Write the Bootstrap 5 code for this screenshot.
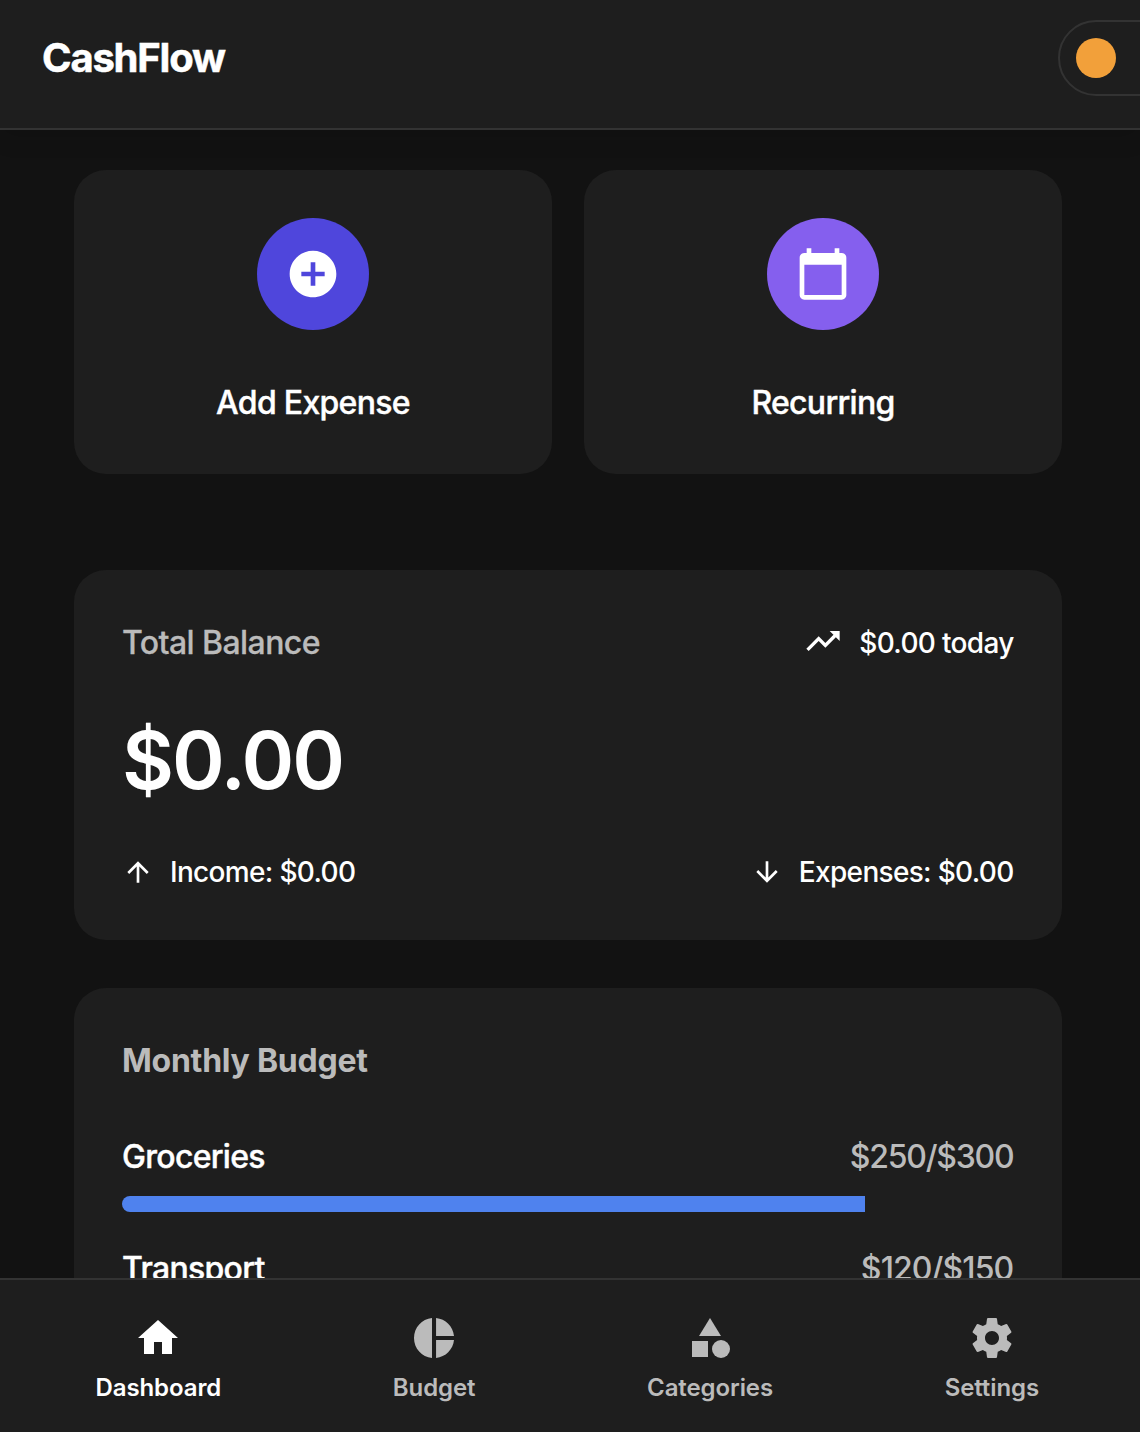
<!DOCTYPE html>
<html lang="en">
<head>
<meta charset="utf-8">
<meta name="viewport" content="width=device-width, initial-scale=1">
<title>CashFlow</title>
<link rel="stylesheet" href="https://cdn.jsdelivr.net/npm/bootstrap@5.3.0/dist/css/bootstrap.min.css">
<style>
body{background:#121212;color:#fff;font-family:Inter,"Liberation Sans",sans-serif;font-size:32px;line-height:40px}
svg{fill:currentColor;display:block;flex:none}
.topbar{height:130px;background:#1e1e1e;border-bottom:2px solid #333;padding:20px 0 0 42px;box-shadow:0 4px 24px rgba(0,0,0,.15);z-index:1}
.brand-name{font-size:40px;line-height:76px;font-weight:700;letter-spacing:-1.2px;-webkit-text-stroke:.5px currentColor}
.theme-switch{width:132px;height:76px;margin-right:-50px;border:2px solid #333;border-radius:38px;padding:16px}
.sun-dot{width:40px;height:40px;background:#f2a03a}
.content-pane{padding:40px 78px 0 74px;min-height:0}
.panel{--bs-card-bg:#1e1e1e;--bs-card-color:#fff;--bs-card-border-width:0;--bs-card-border-radius:32px}
.tile-pair{gap:32px}
.action-tile{height:304px;padding-top:48px}
.disc{width:112px;height:112px;margin-bottom:53px}
.disc-indigo{background:#4f46dc}
.disc-violet{background:#855fee}
.fw-mid{font-weight:500;letter-spacing:-.7px;-webkit-text-stroke:.4px currentColor}
.muted{color:#bbb}
.balance-panel{height:370px;margin-top:96px;padding:49px 48px 44px}
.total-label{font-weight:500;letter-spacing:-.58px;-webkit-text-stroke:.3px currentColor}
.balance-value{font-size:80px;line-height:96px;font-weight:600;letter-spacing:-2.100px;margin-top:45px}
.flow-text{font-size:28px;line-height:48px;gap:16px}
.flow-text span{font-weight:500;letter-spacing:-.68px;margin-right:.4px}
.budget-panel{height:520px;margin-top:48px;padding:49px 48px}
.panel-title{font-size:32px;line-height:48px;font-weight:700;letter-spacing:-.25px}
.budget-rows{margin-top:52px}
.budget-row{height:112px}
.amount{font-weight:500;letter-spacing:-1.250px;margin-right:.7px}
.amount-narrow{letter-spacing:-.9px}
.meter{--bs-progress-height:16px;--bs-progress-bg:transparent;--bs-progress-border-radius:8px;--bs-progress-bar-bg:#4f82ee;margin-top:19px}
.tabs-bar{height:154px;background:#1e1e1e;border-top:2px solid #333;padding:34px 101px 0 95.5px;font-size:24px;line-height:32px;font-weight:600;letter-spacing:-.1px;z-index:1}
.tabs-bar a{color:#bbb;gap:10px}
.tabs-bar a.active{color:#fff}
</style>
<script src="https://cdn.jsdelivr.net/npm/bootstrap@5.3.0/dist/js/bootstrap.bundle.min.js"></script>
</head>
<body class="vh-100 overflow-hidden d-flex flex-column">
<header class="topbar d-flex justify-content-between flex-shrink-0">
  <div class="brand-name">CashFlow</div>
  <div class="theme-switch flex-shrink-0"><div class="sun-dot rounded-circle"></div></div>
</header>
<main class="content-pane flex-grow-1 overflow-hidden">
  <div class="d-flex tile-pair">
    <div class="card panel action-tile flex-fill align-items-center w-50">
      <div class="disc disc-indigo rounded-circle d-flex align-items-center justify-content-center">
        <svg width="56" height="56" viewBox="0 0 24 24"><path d="M12 2C6.480 2 2 6.480 2 12s4.480 10 10 10 10-4.480 10-10S17.520 2 12 2zm5 11h-4v4h-2v-4H7v-2h4V7h2v4h4v2z"/></svg>
      </div>
      <div class="fw-mid">Add Expense</div>
    </div>
    <div class="card panel action-tile flex-fill align-items-center w-50">
      <div class="disc disc-violet rounded-circle d-flex align-items-center justify-content-center">
        <svg width="56" height="56" viewBox="0 0 24 24"><path d="M20 3h-1V1h-2v2H7V1H5v2H4c-1.100 0-2 .9-2 2v16c0 1.100.9 2 2 2h16c1.100 0 2-.9 2-2V5c0-1.100-.9-2-2-2zm0 18H4V8h16v13z"/></svg>
      </div>
      <div class="fw-mid">Recurring</div>
    </div>
  </div>
  <section class="card panel balance-panel">
    <div class="d-flex justify-content-between align-items-center">
      <div class="total-label muted">Total Balance</div>
      <div class="d-flex align-items-center flow-text">
        <svg class="mb-1" width="40" height="40" viewBox="0 0 24 24"><path d="M16 6l2.290 2.290-4.880 4.880-4-4L2 16.590 3.410 18l6-6 4 4 6.300-6.290L22 12V6z"/></svg>
        <span>$0.00 today</span>
      </div>
    </div>
    <div class="balance-value">$0.00</div>
    <div class="d-flex justify-content-between mt-auto">
      <div class="d-flex align-items-center flow-text">
        <svg width="32" height="32" viewBox="0 0 24 24"><path d="M4 12l1.410 1.410L11 7.830V20h2V7.830l5.580 5.590L20 12l-8-8-8 8z"/></svg>
        <span>Income: $0.00</span>
      </div>
      <div class="d-flex align-items-center flow-text">
        <svg width="32" height="32" viewBox="0 0 24 24"><path d="M20 12l-1.410-1.410L13 16.170V4h-2v12.170l-5.580-5.590L4 12l8 8 8-8z"/></svg>
        <span>Expenses: $0.00</span>
      </div>
    </div>
  </section>
  <section class="card panel budget-panel">
    <h2 class="panel-title m-0 muted">Monthly Budget</h2>
    <div class="budget-rows">
      <div class="budget-row">
        <div class="d-flex justify-content-between"><span class="fw-mid">Groceries</span><span class="muted amount">$250/$300</span></div>
        <div class="progress meter"><div class="progress-bar" style="width:83.33%"></div></div>
      </div>
      <div class="budget-row">
        <div class="d-flex justify-content-between"><span class="fw-mid">Transport</span><span class="muted amount amount-narrow">$120/$150</span></div>
        <div class="progress meter"><div class="progress-bar" style="width:80%"></div></div>
      </div>
    </div>
  </section>
</main>
<nav class="tabs-bar d-flex justify-content-between flex-shrink-0">
  <a class="active d-flex flex-column align-items-center text-decoration-none" href="#">
    <svg width="48" height="48" viewBox="0 0 24 24"><path d="M10 20v-6h4v6h5v-8h3L12 3 2 12h3v8z"/></svg><span>Dashboard</span></a>
  <a class="d-flex flex-column align-items-center text-decoration-none" href="#">
    <svg width="48" height="48" viewBox="0 0 24 24"><path d="M11 2v20c-5.070-.5-9-4.790-9-10s3.930-9.500 9-10zm2.030 0v8.990H22c-.47-4.740-4.240-8.520-8.970-8.990zm0 11.010V22c4.740-.47 8.500-4.250 8.970-8.990h-8.970z"/></svg><span>Budget</span></a>
  <a class="d-flex flex-column align-items-center text-decoration-none" href="#">
    <svg width="48" height="48" viewBox="0 0 24 24"><path d="M12 2l-5.500 9h11z"/><circle cx="17.500" cy="17.500" r="4.500"/><path d="M3 13.500h8v8H3z"/></svg><span>Categories</span></a>
  <a class="d-flex flex-column align-items-center text-decoration-none" href="#">
    <svg width="48" height="48" viewBox="0 0 24 24"><path d="M19.430 12.980c.04-.32.07-.64.07-.98s-.03-.66-.07-.98l2.110-1.650c.19-.15.24-.42.12-.64l-2-3.460c-.12-.22-.39-.3-.61-.22l-2.490 1c-.52-.4-1.080-.73-1.690-.98l-.38-2.650C14.460 2.180 14.250 2 14 2h-4c-.25 0-.46.18-.49.42l-.38 2.650c-.61.25-1.170.59-1.690.98l-2.490-1c-.23-.09-.49 0-.61.22l-2 3.460c-.13.22-.07.49.12.64l2.110 1.650c-.04.32-.07.65-.07.98s.03.66.07.98l-2.110 1.650c-.19.15-.24.42-.12.64l2 3.460c.12.22.39.3.61.22l2.490-1c.52.4 1.080.73 1.690.98l.38 2.650c.03.24.24.42.49.42h4c.25 0 .46-.18.49-.42l.38-2.650c.61-.25 1.170-.59 1.690-.98l2.490 1c.23.09.49 0 .61-.22l2-3.460c.12-.22.07-.49-.12-.64l-2.110-1.650zM12 15.500c-1.930 0-3.500-1.570-3.500-3.500s1.570-3.500 3.500-3.500 3.500 1.570 3.500 3.500-1.570 3.500-3.500 3.500z"/></svg><span>Settings</span></a>
</nav>
</body>
</html>
